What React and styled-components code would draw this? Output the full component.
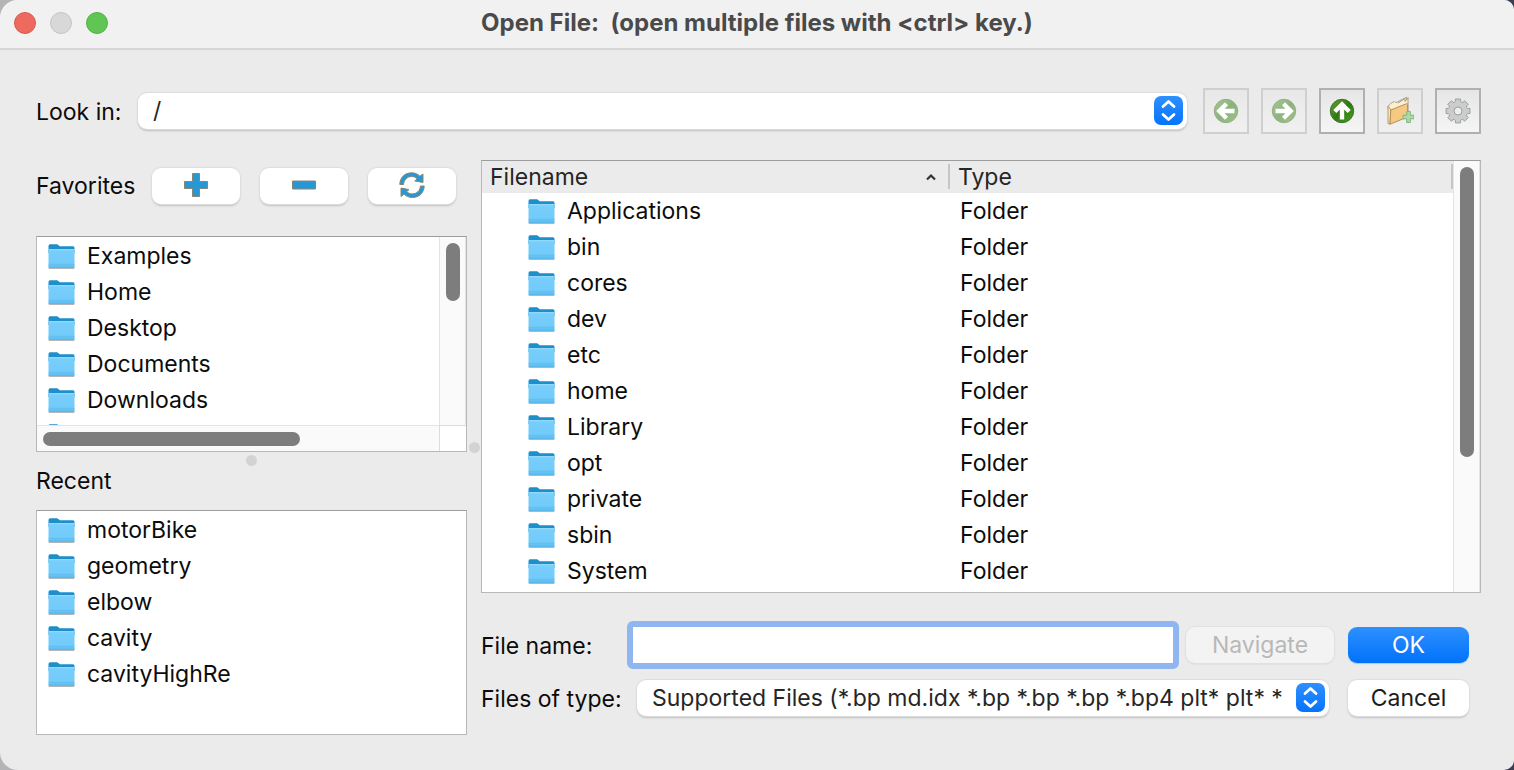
import React from "react";
import styled, { createGlobalStyle, css } from "styled-components";

const GlobalStyle = createGlobalStyle`
  *, *::before, *::after { box-sizing: border-box; }
  body {
    margin: 0;
    background: linear-gradient(90deg, #b4b4b6 0%, #b4b4b6 40%, #3c3d50 90%);
    font-family: Inter, "Liberation Sans", sans-serif;
    font-size: 23px;
    color: #0c0c0c;
  }
  button, input, select { font: inherit; color: inherit; margin: 0; }
  svg { display: block; flex: none; }
`;

const Window = styled.div`
  display: flex;
  flex-direction: column;
  min-height: 100vh;
  background: #ebebeb;
  border-radius: 18px 10px 10px 18px;
  overflow: hidden;
`;

const TitleBar = styled.header`
  display: grid;
  grid-template-columns: 1fr auto 1fr;
  align-items: center;
  height: 50px;
  padding: 0 14px 3px;
  background: #f1f1f1;
  border-bottom: 2px solid #d6d6d6;
`;

const Lights = styled.div`
  display: flex;
  gap: 14px;
`;

const Light = styled.button`
  width: 22px;
  height: 22px;
  padding: 0;
  border-radius: 50%;
  background: ${(p) => p.$fill};
  border: 1px solid ${(p) => p.$edge};
`;

const Title = styled.h1`
  margin: 0;
  font-size: 24px;
  font-weight: 700;
  line-height: 28px;
  color: #4a4a4a;
  white-space: pre;
`;

const Body = styled.main`
  flex: 1;
  display: flex;
  flex-direction: column;
  gap: 26px;
  padding: 38px 33px 35px 36px;
`;

const LookRow = styled.div`
  display: flex;
  align-items: center;
`;

const FieldLabel = styled.label`
  flex: none;
  width: ${(p) => p.$width}px;
  padding-top: 2px;
  white-space: nowrap;
`;

const SelectBox = styled.div`
  position: relative;
  flex: 1;
  min-width: 0;
  height: 36px;
  margin-right: ${(p) => p.$after}px;
`;

const Select = styled.select`
  appearance: none;
  display: block;
  width: 100%;
  height: 100%;
  padding: 0 36px 0 15px;
  border: 0;
  border-radius: 9px;
  background: #fff;
  box-shadow: 0 0 1px 1px #dcdcdc, 0 2px 2px #bdbdbd;
  color: #262626;
  outline: none;
`;

const Stepper = styled.span`
  position: absolute;
  top: 3px;
  right: 4px;
  display: grid;
  place-items: center;
  width: 29px;
  height: 29px;
  border-radius: 7px;
  background: linear-gradient(#2e90ff, #0573fb);
  pointer-events: none;
`;

const Tools = styled.div`
  display: flex;
  gap: 12px;
`;

const ToolButton = styled.button`
  display: grid;
  place-items: center;
  width: 46px;
  height: 46px;
  padding: 0 0 1px;
  border: 2px solid #b0b0b0;
  background: linear-gradient(#e6e6e6, #f5f5f5);

  &:disabled {
    border-color: #cfcfcf;
    background: linear-gradient(#e8e8e8, #f0f0f0);
  }
`;

const Split = styled.div`
  flex: 1;
  display: grid;
  grid-template-columns: minmax(0, 431fr) 14px minmax(0, 1000fr);
`;

const Column = styled.div`
  display: flex;
  flex-direction: column;
  min-width: 0;
`;

const FavoritesBar = styled.div`
  display: flex;
  align-items: center;
  gap: 20px;
  height: 76px;
  padding: 0 11px 24px 0;
`;

const SectionTitle = styled.h2`
  flex: 1;
  min-width: 0;
  margin: 0;
  font-size: 23px;
  font-weight: 400;
  line-height: 28px;
  white-space: nowrap;
`;

const RecentTitle = styled(SectionTitle)`
  flex: none;
  height: 43px;
`;

const pill = css`
  display: grid;
  place-items: center;
  flex: none;
  height: 36px;
  padding: 0;
  border: 0;
  border-radius: 9px;
  background: #fff;
  box-shadow: 0 0 1px 1px #dedede, 0 2px 2px #c0c0c0;
`;

const FavoriteButton = styled.button`
  ${pill}
  width: 88px;
  padding-bottom: 2px;
`;

const Panel = styled.div`
  position: relative;
  min-height: 0;
  border: 1px solid #b8b8b8;
  border-top-color: #9d9d9d;
  background: #fff;
  overflow: hidden;
`;

const ScrollPanel = styled(Panel)`
  flex: 216 1 0;
  display: grid;
  grid-template-columns: minmax(0, 1fr) 27px;
  grid-template-rows: minmax(0, 1fr) 26px;
`;

const RecentPanel = styled(Panel)`
  flex: 225 1 0;
`;

const FilePanel = styled(Panel)`
  flex: 1 1 0;
  display: grid;
  grid-template-columns: minmax(0, 1fr) 27px;
  grid-template-rows: minmax(0, 1fr);
`;

const List = styled.ul`
  min-height: 0;
  margin: 0;
  padding: 1px 0 0;
  list-style: none;
  overflow: hidden;
`;

const Item = styled.li`
  display: flex;
  align-items: center;
  gap: 12px;
  height: 36px;
  padding-left: ${(p) => p.$indent || 11}px;
  white-space: nowrap;
`;

const Track = styled.div`
  padding: 6px;
  background: #fafafa;
  border: 0 solid #e4e4e4;
  border-width: ${(p) => (p.$across ? "1px 0 0 0" : "0 1px 0 1px")};
`;

const Thumb = styled.div`
  width: ${(p) => (p.$across ? "66%" : "14px")};
  height: ${(p) => (p.$across ? "14px" : p.$size)};
  border-radius: 7px;
  background: #7d7d7d;
`;

const Corner = styled.div`
  border: 1px solid #dcdcdc;
  border-width: 1px 0 0 1px;
`;

const Handle = styled.span`
  align-self: center;
  justify-self: center;
  flex: none;
  width: 11px;
  height: 11px;
  border-radius: 50%;
  background: #d3d3d3;
`;

const ListHandle = styled(Handle)`
  margin: 3px 0 1px;
`;

const Files = styled.div`
  min-height: 0;
  overflow: hidden;
`;

const Table = styled.table`
  width: 100%;
  table-layout: fixed;
  border-collapse: collapse;
`;

const HeadCell = styled.th`
  width: ${(p) => p.$width};
  height: 32px;
  padding: 3px 0 4px 8px;
  background: #ebebeb;
  font-weight: 400;
  text-align: left;
  color: #262626;
`;

const HeadLabel = styled.div`
  display: flex;
  align-items: center;
  justify-content: space-between;
  height: 25px;
  padding-right: 12px;
  border-right: 2px solid #c6c6c6;
`;

const Cell = styled.td`
  height: 36px;
  padding: 0 0 0 ${(p) => p.$left || 0}px;
`;

const Form = styled.form`
  display: flex;
  flex-direction: column;
  gap: 11px;
  padding: 28px 12px 19px 0;
`;

const FormRow = styled.div`
  display: flex;
  align-items: center;
`;

const NameInput = styled.input`
  flex: 1;
  min-width: 0;
  height: 48px;
  margin-right: 7px;
  padding: 0 8px;
  border: 6px solid #8fb6f0;
  border-radius: 6px;
  background: #fff;
  outline: none;
`;

const PushButton = styled.button`
  ${pill}
  width: ${(p) => p.$width}px;
  color: #1c1c1c;

  &:disabled {
    color: #b8b8b8;
    background: #f3f3f3;
    box-shadow: 0 0 1px 1px #e2e2e2, 0 1px 2px #cfcfcf;
  }
`;

const NavigateButton = styled(PushButton)`
  margin-right: 14px;
`;

const DefaultButton = styled(PushButton)`
  color: #fff;
  background: linear-gradient(#2e90ff, #0072fa);
  box-shadow: 0 1px 1px #a9c8ee;
`;

function FolderIcon() {
  return (
    <svg width="27" height="28" viewBox="0 -2 27 28" aria-hidden="true">
      <defs>
        <linearGradient id="folder-front" x1="0" y1="0" x2="0" y2="1">
          <stop offset="0" stopColor="#78cefb" />
          <stop offset=".75" stopColor="#72cbfa" />
          <stop offset="1" stopColor="#56b8ec" />
        </linearGradient>
      </defs>
      <rect x="0.5" y="22" width="26" height="3" rx="1" fill="#8f979d" opacity=".7" />
      <path d="M.5 2Q.5.3 2 .3h6.700q1 0 1.600.7l.8.700q.5.500 1.400.500H25q1.500 0 1.500 1.500V9H.5z" fill="#1f8fcb" />
      <path d="M.5 5.200h26V22.500q0 1.500-1.500 1.500H2Q.5 24 .5 22.500z" fill="url(#folder-front)" />
      <path d="M.5 20.300h26" stroke="#5fbbea" strokeWidth=".6" />
      <path d="M.8 5.700h25.400" stroke="#9adffe" strokeWidth="1" />
    </svg>
  );
}

function Chevrons() {
  return (
    <svg width="17" height="23" viewBox="0 0 17 23" fill="none" stroke="#fff" strokeWidth="2.800" strokeLinecap="round" strokeLinejoin="round" aria-hidden="true">
      <path d="M3 7.500l5.500-5L14 7.500M3 15.500l5.500 5L14 15.500" />
    </svg>
  );
}

function ArrowIcon({ angle, id }) {
  return (
    <svg width="26" height="26" viewBox="0 0 26 26" aria-hidden="true">
      <defs>
        <linearGradient id={id} x1="0" y1="0" x2="1" y2="1">
          <stop offset="0" stopColor="#66a637" />
          <stop offset=".5" stopColor="#2e7a10" />
          <stop offset="1" stopColor="#4f9e27" />
        </linearGradient>
      </defs>
      <g opacity={angle ? 0.5 : 1}>
        <circle cx="13" cy="13" r="11.700" fill={`url(#${id})`} stroke="#3f6f2b" strokeWidth="1" />
      </g>
      <path
        d="M13 21.500V7.500M5.800 13.500l7.200-7.200 7.200 7.200"
        fill="none"
        stroke="#fff"
        strokeWidth="4.400"
        transform={`rotate(${angle} 13 13)`}
      />
    </svg>
  );
}

function NewFolderIcon() {
  return (
    <svg width="28" height="30" viewBox="0 0 28 30" aria-hidden="true">
      <path d="M2 10l2-1.500 1-1.500 3.500-1.500 1.500 1.200L19 2l1.500-.8V8L4 28z" fill="#fbefcf" stroke="#b7a785" strokeWidth="1" />
      <path d="M12 7l7-4.500v3L22 1.500v18" fill="#fdf0d8" stroke="#a89a80" strokeWidth="1" />
      <path d="M2 10v17.500l2 .7L5 14z" fill="#f8e3b4" stroke="#b99b6c" strokeWidth="1" />
      <path d="M4.800 14L20.500 7.700Q21.600 7.400 21.600 8.500V21L4 28.200z" fill="#f5c981" stroke="#b08f5e" strokeWidth="1" />
      <path d="M20.700 15.500h3.600v3.700H28v3.600h-3.700v3.700h-3.600v-3.700H17v-3.600h3.700z" fill="#a9dba4" stroke="#83b481" strokeWidth="1" />
    </svg>
  );
}

const gearTeeth = Array.from({ length: 8 }, (_, i) => {
  const at = (radius, offset) => {
    const turn = ((i * 45 + offset) * Math.PI) / 180;
    return `${(13 + radius * Math.sin(turn)).toFixed(2)} ${(13 - radius * Math.cos(turn)).toFixed(2)}`;
  };
  return `${at(10, -15)} L${at(12.2, -12)} L${at(12.2, 12)} L${at(10, 15)} Q${at(8.6, 22.5)} ${at(10, 30)}`;
});

function GearIcon() {
  return (
    <svg width="26" height="26" viewBox="0 0 26 26" aria-hidden="true">
      <path
        fillRule="evenodd"
        d={`M${gearTeeth.join(" L")}z M13 9a4 4 0 1 0 0 8 4 4 0 0 0 0-8z`}
        fill="#cbcccc"
        stroke="#9c9e9e"
        strokeWidth="1"
        strokeLinejoin="round"
      />
    </svg>
  );
}

const glyph = { fill: "#2797d6", stroke: "#8a8674", strokeWidth: 1 };

function PlusIcon() {
  return (
    <svg width="24" height="24" viewBox="0 0 24 24" aria-hidden="true">
      <path d="M8.500.5h7v8h8v7h-8v8h-7v-8h-8v-7h8z" {...glyph} />
    </svg>
  );
}

function MinusIcon() {
  return (
    <svg width="24" height="24" viewBox="0 0 24 24" aria-hidden="true">
      <path d="M.5 8h23v8H.5z" {...glyph} />
    </svg>
  );
}

function ReloadIcon() {
  return (
    <svg width="26" height="26" viewBox="0 0 26 26" aria-hidden="true">
      <path d="M.8 12.500C.8 5.500 6 .8 12.500.8c3.400 0 6.300 1.200 8.400 3.400L24 2v8.500l-8.300-1.600 2.500-2C16.700 5.300 14.800 4.500 12.600 4.500 8.200 4.500 4.700 8 4.600 12.500z" {...glyph} />
      <path d="M25.200 14c0 6.700-5.200 11.500-11.700 11.500-3.400 0-6.300-1.200-8.400-3.400L2 24.500V16l8 1.600-2.300 2c1.500 1.600 3.500 2.300 5.700 2.300 4.400 0 7.900-3.400 8-7.900z" {...glyph} />
    </svg>
  );
}

function SortIcon() {
  return (
    <svg width="10" height="8" viewBox="0 0 10 8" fill="none" stroke="#333" strokeWidth="2.200" aria-hidden="true">
      <path d="M1 6.500l4-4 4 4" />
    </svg>
  );
}

const favorites = ["Examples", "Home", "Desktop", "Documents", "Downloads", ""];
const recent = ["motorBike", "geometry", "elbow", "cavity", "cavityHighRe"];
const files = ["Applications", "bin", "cores", "dev", "etc", "home", "Library", "opt", "private", "sbin", "System"];

function FolderList({ names, label }) {
  return (
    <List aria-label={label}>
      {names.map((name) => (
        <Item key={name}>
          <FolderIcon />
          {name}
        </Item>
      ))}
    </List>
  );
}

function DropDown({ id, value, after }) {
  return (
    <SelectBox $after={after}>
      <Select id={id} defaultValue={value}>
        <option>{value}</option>
      </Select>
      <Stepper>
        <Chevrons />
      </Stepper>
    </SelectBox>
  );
}

export default function App() {
  return (
    <Window>
      <GlobalStyle />
      <TitleBar>
        <Lights>
          <Light aria-label="Close" $fill="#ed6a5e" $edge="#d9594e" />
          <Light aria-label="Minimize" $fill="#d8d8d8" $edge="#c4c4c4" />
          <Light aria-label="Zoom" $fill="#61c554" $edge="#52b146" />
        </Lights>
        <Title>{"Open File:  (open multiple files with <ctrl> key.)"}</Title>
      </TitleBar>
      <Body>
        <LookRow>
          <FieldLabel htmlFor="look-in" $width={102}>Look in:</FieldLabel>
          <DropDown id="look-in" value="/" after={16} />
          <Tools>
            <ToolButton disabled aria-label="Back">
              <ArrowIcon angle={-90} id="arrow-back" />
            </ToolButton>
            <ToolButton disabled aria-label="Forward">
              <ArrowIcon angle={90} id="arrow-forward" />
            </ToolButton>
            <ToolButton aria-label="Parent folder">
              <ArrowIcon angle={0} id="arrow-up" />
            </ToolButton>
            <ToolButton disabled aria-label="New folder">
              <NewFolderIcon />
            </ToolButton>
            <ToolButton aria-label="Settings">
              <GearIcon />
            </ToolButton>
          </Tools>
        </LookRow>
        <Split>
          <Column>
            <FavoritesBar>
              <SectionTitle>Favorites</SectionTitle>
              <FavoriteButton aria-label="Add favorite">
                <PlusIcon />
              </FavoriteButton>
              <FavoriteButton aria-label="Remove favorite">
                <MinusIcon />
              </FavoriteButton>
              <FavoriteButton aria-label="Reset favorites">
                <ReloadIcon />
              </FavoriteButton>
            </FavoritesBar>
            <ScrollPanel>
              <FolderList names={favorites} label="Favorites" />
              <Track>
                <Thumb $size="58px" />
              </Track>
              <Track $across>
                <Thumb $across />
              </Track>
              <Corner />
            </ScrollPanel>
            <ListHandle />
            <RecentTitle>Recent</RecentTitle>
            <RecentPanel>
              <FolderList names={recent} label="Recent" />
            </RecentPanel>
          </Column>
          <Handle />
          <Column>
            <FilePanel>
              <Files>
                <Table>
                  <thead>
                    <tr>
                      <HeadCell $width="48.2%">
                        <HeadLabel>
                          Filename
                          <SortIcon />
                        </HeadLabel>
                      </HeadCell>
                      <HeadCell $width="51.8%">
                        <HeadLabel>Type</HeadLabel>
                      </HeadCell>
                    </tr>
                  </thead>
                  <tbody>
                    {files.map((name) => (
                      <tr key={name}>
                        <Cell>
                          <Item as="div" $indent={46}>
                            <FolderIcon />
                            {name}
                          </Item>
                        </Cell>
                        <Cell $left={10}>Folder</Cell>
                      </tr>
                    ))}
                  </tbody>
                </Table>
              </Files>
              <Track>
                <Thumb $size="290px" />
              </Track>
            </FilePanel>
            <Form onSubmit={(e) => e.preventDefault()}>
              <FormRow>
                <FieldLabel htmlFor="file-name" $width={146}>File name:</FieldLabel>
                <NameInput id="file-name" type="text" />
                <NavigateButton type="button" disabled $width={148}>Navigate</NavigateButton>
                <DefaultButton type="submit" $width={121}>OK</DefaultButton>
              </FormRow>
              <FormRow>
                <FieldLabel htmlFor="file-type" $width={156}>Files of type:</FieldLabel>
                <DropDown id="file-type" value="Supported Files (*.bp md.idx *.bp *.bp *.bp *.bp4 plt* plt* *" after={19} />
                <PushButton type="button" $width={121}>Cancel</PushButton>
              </FormRow>
            </Form>
          </Column>
        </Split>
      </Body>
    </Window>
  );
}
